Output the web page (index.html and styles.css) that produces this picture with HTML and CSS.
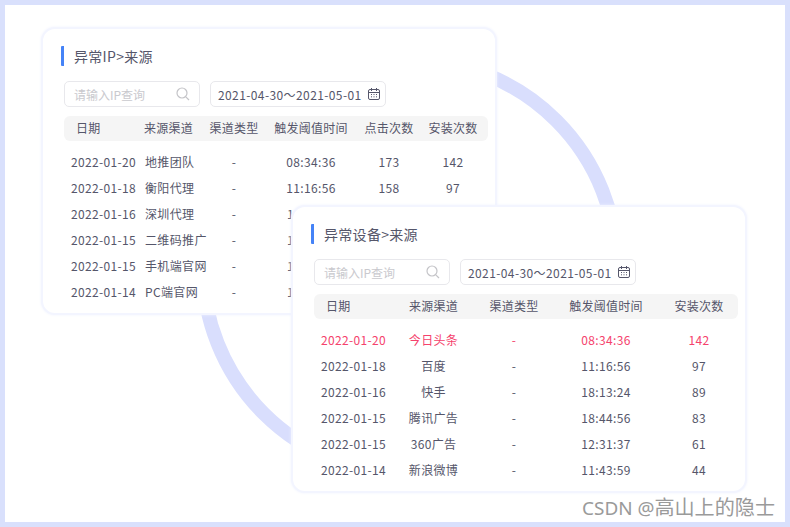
FILE: index.html
```html
<!DOCTYPE html>
<html lang="zh-CN">
<head>
  <meta charset="UTF-8" />
  <title>异常来源</title>
  <link rel="stylesheet" href="styles.css">
</head>
<body>

  <div class="stage">

    <div class="ring"></div>

    <!-- 异常IP -->
    <div class="card card-ip">
      <h2 class="title">异常IP&gt;来源</h2>
      <div class="filters">
        <div class="search">
          <span>请输入IP查询</span>
          <svg width="14" height="14" viewBox="0 0 14 14" fill="none" stroke="#c4c4c8" stroke-width="1.2"><circle cx="6" cy="6" r="5"/><path d="M9.8 9.8 13 13"/></svg>
        </div>
        <div class="range">
          <span>2021-04-30～2021-05-01</span>
          <svg width="12" height="12" viewBox="0 0 12 12" fill="none" stroke="#55566a" stroke-width="1"><rect x="0.5" y="1.5" width="11" height="10" rx="1.5"/><path d="M0.5 4.5h11M3.5 0v3M8.5 0v3M3 6.5h1M5.5 6.5h1M8 6.5h1M3 8.8h1M5.5 8.8h1M8 8.8h1"/></svg>
        </div>
      </div>
      <div class="table">
        <div class="head">
          <span>日期</span><span>来源渠道</span><span>渠道类型</span><span>触发阈值时间</span><span>点击次数</span><span>安装次数</span>
        </div>
        <div class="row"><span>2022-01-20</span><span>地推团队</span><span>-</span><span>08:34:36</span><span>173</span><span>142</span></div>
        <div class="row"><span>2022-01-18</span><span>衡阳代理</span><span>-</span><span>11:16:56</span><span>158</span><span>97</span></div>
        <!-- 下面几行被第二张卡片盖住，只露出时间的第一个字 -->
        <div class="row"><span>2022-01-16</span><span>深圳代理</span><span>-</span><span class="cut">1</span></div>
        <div class="row"><span>2022-01-15</span><span>二维码推广</span><span>-</span><span class="cut">1</span></div>
        <div class="row"><span>2022-01-15</span><span>手机端官网</span><span>-</span><span class="cut">1</span></div>
        <div class="row"><span>2022-01-14</span><span>PC端官网</span><span>-</span><span class="cut">1</span></div>
      </div>
    </div>

    <!-- 异常设备 -->
    <div class="card card-device">
      <h2 class="title">异常设备&gt;来源</h2>
      <div class="filters">
        <div class="search">
          <span>请输入IP查询</span>
          <svg width="14" height="14" viewBox="0 0 14 14" fill="none" stroke="#c4c4c8" stroke-width="1.2"><circle cx="6" cy="6" r="5"/><path d="M9.8 9.8 13 13"/></svg>
        </div>
        <div class="range">
          <span>2021-04-30～2021-05-01</span>
          <svg width="12" height="12" viewBox="0 0 12 12" fill="none" stroke="#55566a" stroke-width="1"><rect x="0.5" y="1.5" width="11" height="10" rx="1.5"/><path d="M0.5 4.5h11M3.5 0v3M8.5 0v3M3 6.5h1M5.5 6.5h1M8 6.5h1M3 8.8h1M5.5 8.8h1M8 8.8h1"/></svg>
        </div>
      </div>
      <div class="table">
        <div class="head">
          <span>日期</span><span>来源渠道</span><span>渠道类型</span><span>触发阈值时间</span><span>安装次数</span>
        </div>
        <div class="row alert"><span>2022-01-20</span><span>今日头条</span><span>-</span><span>08:34:36</span><span>142</span></div>
        <div class="row"><span>2022-01-18</span><span>百度</span><span>-</span><span>11:16:56</span><span>97</span></div>
        <div class="row"><span>2022-01-16</span><span>快手</span><span>-</span><span>18:13:24</span><span>89</span></div>
        <div class="row"><span>2022-01-15</span><span>腾讯广告</span><span>-</span><span>18:44:56</span><span>83</span></div>
        <div class="row"><span>2022-01-15</span><span>360广告</span><span>-</span><span>12:31:37</span><span>61</span></div>
        <div class="row"><span>2022-01-14</span><span>新浪微博</span><span>-</span><span>11:43:59</span><span>44</span></div>
      </div>
    </div>

    <div class="mark">CSDN @<span class="mark-name">高山上的隐士</span></div>

  </div>

</body>
</html>
```

FILE: styles.css
```css
* { box-sizing: border-box; }
html, body { margin: 0; height: 100%; }
body { font-family: "Noto Sans CJK SC", "Noto Sans", sans-serif; color: #55566a; overflow: hidden; }

.stage { position: relative; width: 790px; height: 527px; background: #fff; border: 5px solid #d9e0fc; overflow: hidden; }

.ring { position: absolute; left: 191px; top: 48px; width: 428px; height: 428px; border: 14px solid #d9defd; border-radius: 50%; }

.card { position: absolute; width: 456px; height: 288px; padding: 17px 8px 0 18px; background: #fff; border: 2px solid #f3f5ff; border-radius: 14px; box-shadow: 0 0 3px #f0f2ff; }
.card-ip { left: 36px; top: 22px; }
.card-device { left: 286px; top: 200px; }

.title { margin: 0 0 15px; height: 20px; padding-left: 10px; border-left: 3px solid #4583f7; border-radius: 1px; font-size: 14px; font-weight: 400; line-height: 20px; letter-spacing: 0.3px; }

.filters { display: flex; gap: 10px; margin-left: 3px; }
.search, .range { display: flex; align-items: center; height: 26px; border: 1px solid #e8e8ec; border-radius: 5px; font-size: 12px; }
.search { width: 136px; padding: 0 9px; justify-content: space-between; color: #c9c9ce; }
.range { width: 176px; padding: 0 5px 0 7px; justify-content: space-between; letter-spacing: 0.4px; }

.table { margin: 9px 0 0 3px; width: 424px; font-size: 12px; letter-spacing: 0.25px; }
.head, .row { display: grid; align-items: center; text-align: center; white-space: nowrap; }
.card-ip .head, .card-ip .row { grid-template-columns: 80px 56px 68px 86px 70px 58px; }
.card-ip span:nth-child(2) { text-align: left; }
.card-ip .row span:nth-child(2) { padding-left: 1px; }
.card-device .head, .card-device .row { grid-template-columns: 74px 91px 70px 114px 72px; }
.head { height: 25px; padding-bottom: 2px; margin-bottom: 7px; background: #f5f5f5; border-radius: 6px; }
.row { height: 26px; letter-spacing: 0.35px; }
.head span:first-child { text-align: left; padding-left: 12px; }
.row span:first-child { text-align: left; padding-left: 7px; }
.row .cut { text-align: left; padding-left: 19px; }
.row.alert { color: #f5426c; }

.mark { position: absolute; right: 10px; bottom: 2px; font-family: "Noto Sans", "Noto Sans CJK SC", sans-serif; font-size: 18.9px; line-height: 24px; color: #9a9a9a; }
.mark-name { font-size: 20.1px; }
```
